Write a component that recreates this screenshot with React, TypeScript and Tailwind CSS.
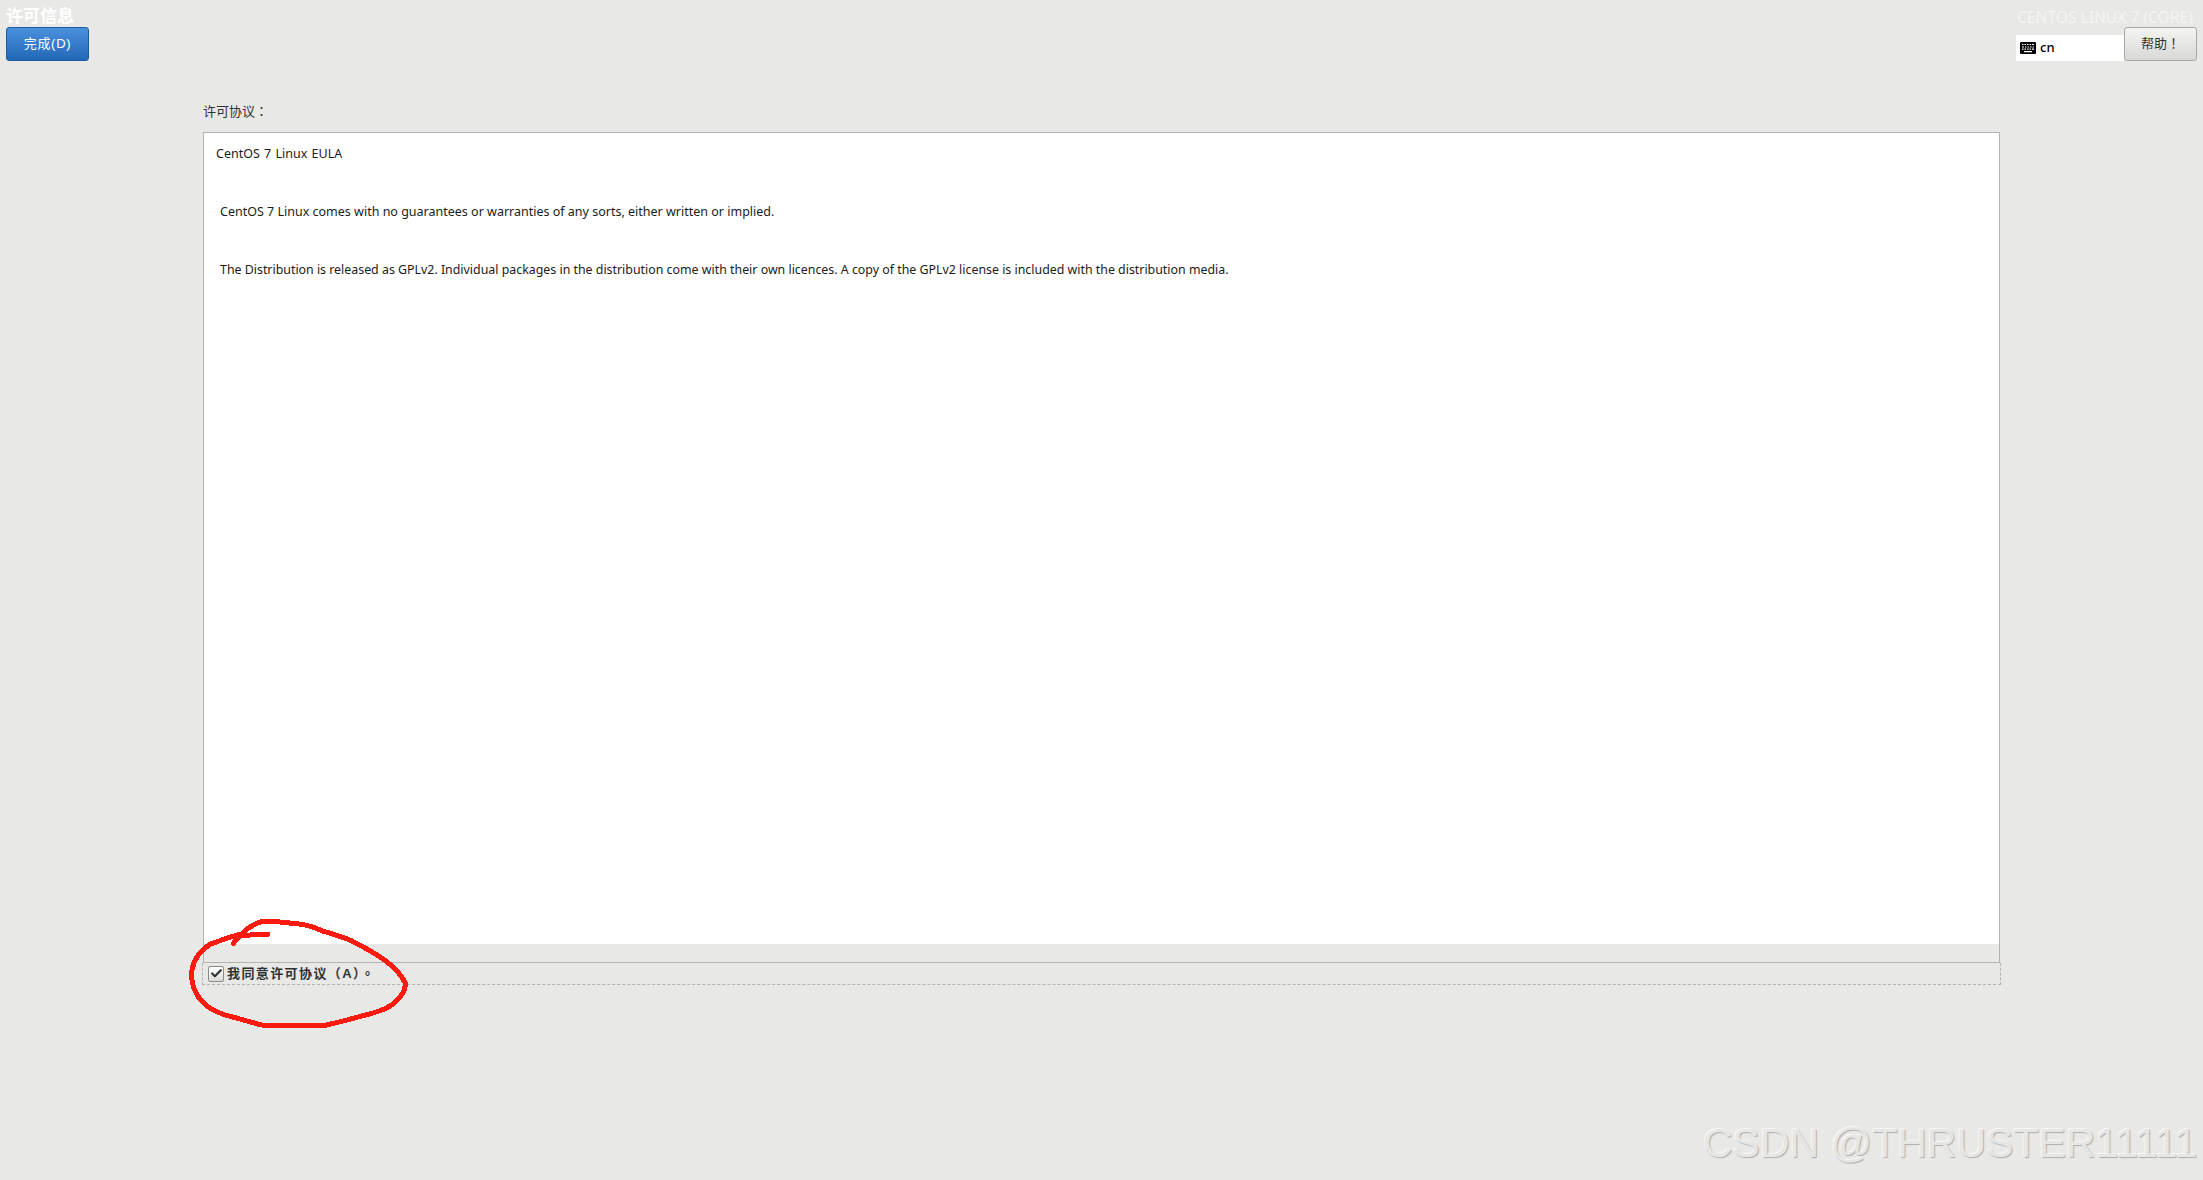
import { Check } from "lucide-react";

const cjk = "font-['Liberation_Sans','Noto_Sans_CJK_TC',sans-serif]";
const body = "font-['Noto_Sans','Noto_Sans_CJK_TC',sans-serif]";

function KeyboardGlyph() {
  return (
    <svg width="16" height="12" viewBox="0 0 16 12" className="shrink-0">
      <rect width="16" height="12" rx="1" fill="#000" />
      <path d="M2 2.5h1.5M4.5 2.5H6M7 2.5h1.5M9.5 2.5H11M12 2.5h2M2 5h2M5 5h1.5M7.5 5H9M10 5h1.5M12.5 5H14M2 7.2h1.5M4.5 7.2H6M7 7.2h1.5M9.5 7.2H11M12 7.2h2M4 9.6h8" stroke="#fff" strokeWidth="1.2" fill="none" />
    </svg>
  );
}

export default function App() {
  return (
    <div className={`relative h-[1180px] w-[2203px] overflow-hidden bg-[#e8e8e7] ${body}`}>
      <header className="flex h-[61px] items-start justify-between pr-[6px]">
        <div className="pl-[6px] pt-[7px]">
          <div className={`h-[20px] text-[17px] leading-[20px] font-bold text-white ${cjk}`}>许可信息</div>
          <button className={`block h-[34px] w-[83px] rounded-[3px] border border-[#1f5a9e] bg-gradient-to-b from-[#4a90dc] to-[#2368b8] text-[13px] tracking-[0.7px] text-white ${cjk}`}>
            完成(D)
          </button>
        </div>
        <div className="w-[181px] pt-[7px]">
          <div className="h-[20px] whitespace-nowrap pl-px text-[15.6px] leading-[20px] text-[#f4f4f3]">CENTOS LINUX 7 (CORE)</div>
          <div className="flex h-[34px] items-start">
            <div className="mt-[8px] flex h-[26px] w-[108px] items-center gap-[4px] bg-white pl-[4px] text-[13px] font-medium text-black">
              <KeyboardGlyph />
              <span>cn</span>
            </div>
            <button className={`h-[34px] w-[73px] rounded-[3px] border border-[#a9a9a6] bg-gradient-to-b from-[#f4f4f3] to-[#d8d8d6] text-[13px] text-[#2e3436] ${cjk}`}>
              帮助！
            </button>
          </div>
        </div>
      </header>

      <main className="ml-[203px] w-[1797px] pt-[41px]">
        <div className={`h-[30px] text-[13px] leading-[19px] text-[#2e3436] ${cjk}`}>许可协议：</div>
        <section className="flex h-[831px] flex-col border border-b-0 border-[#b3b3b1]">
          <div className="flex-1 bg-white pl-[12px] pt-[11px] text-[12.5px] leading-[20px] text-[#1c1c1c]">
            <p className="[word-spacing:1px]">CentOS 7 Linux EULA</p>
            <p className="mt-[38px] pl-[4px]">CentOS 7 Linux comes with no guarantees or warranties of any sorts, either written or implied.</p>
            <p className="mt-[38px] pl-[4px] text-[12.39px]">The Distribution is released as GPLv2. Individual packages in the distribution come with their own licences. A copy of the GPLv2 license is included with the distribution media.</p>
          </div>
          <div className="h-[19px] border-b border-[#b3b3b1] bg-[#e8e8e7]" />
        </section>
        <label className={`-ml-px flex h-[22px] w-[1799px] items-center gap-[3px] border border-t-0 border-dashed border-[#b3b3b1] pl-[5px] text-[13px] font-bold tracking-[1.4px] text-[#2e3436] ${cjk}`}>
          <span className="flex h-[16px] w-[16px] items-center justify-center rounded-[2px] border border-[#8a8d8c] bg-gradient-to-b from-white to-[#dcdcda]">
            <Check size={13} strokeWidth={4} className="text-[#2e3436]" />
          </span>
          <span>我同意许可协议（A）。</span>
        </label>
      </main>

      {/* hand-drawn annotation */}
      <svg viewBox="0 0 780 450" className="absolute left-[170px] top-[900px] h-[150px] w-[260px]" fill="none" shapeRendering="crispEdges">
        <path
          d="M293 103 C260 104 230 105 210 107 L190 130 M215 102 C180 110 150 122 122 132 C95 148 72 175 66 210 C62 240 70 270 88 295 C105 318 135 335 165 345 C195 352 225 362 250 368 C270 376 295 378 320 377 C370 378 420 378 470 375 C500 368 540 358 575 348 C610 340 640 332 665 315 C690 295 708 275 706 250 C695 225 680 208 650 185 C620 162 580 140 540 120 C510 108 480 100 455 92 C430 80 400 72 370 70 C340 68 310 62 280 64 C255 68 235 82 215 102"
          stroke="#ff1a10"
          strokeWidth="15"
          strokeLinecap="round"
          strokeLinejoin="round"
        />
      </svg>

      <div className="absolute left-[1703px] top-[1118px] whitespace-nowrap font-['Liberation_Sans',sans-serif] text-[41px] leading-[50px] text-[#e6e6e5] [text-shadow:1px_1px_1px_#adadad,-1px_-1px_1px_#f8f8f8]">
        CSDN @THRUSTER11111
      </div>
    </div>
  );
}
